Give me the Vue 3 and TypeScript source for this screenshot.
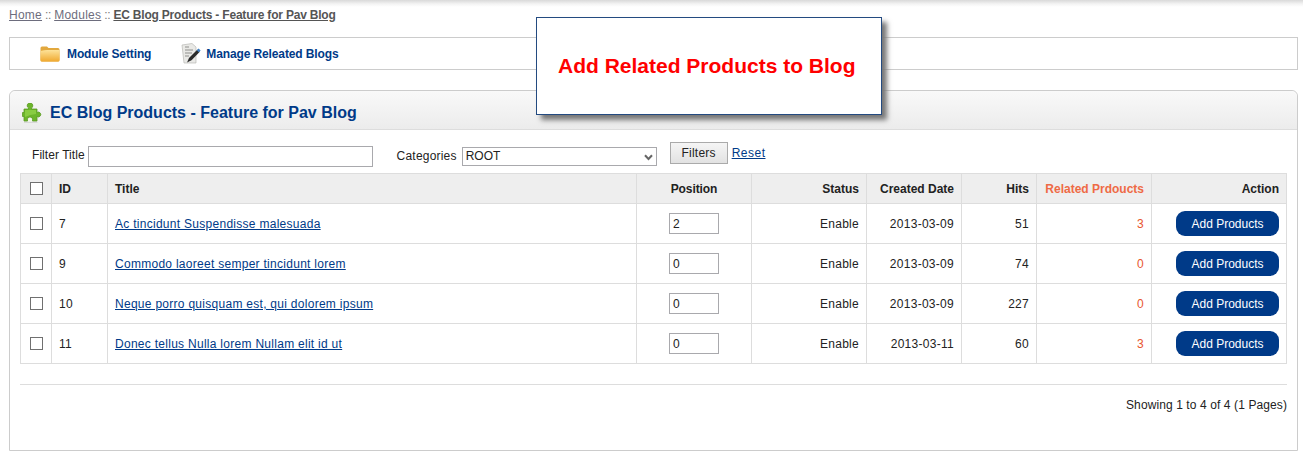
<script setup lang="ts">
interface Row { id: number; title: string; position: number; date: string; hits: number; related: number }
const rows: Row[] = [
  { id: 7, title: 'Ac tincidunt Suspendisse malesuada', position: 2, date: '2013-03-09', hits: 51, related: 3 },
  { id: 9, title: 'Commodo laoreet semper tincidunt lorem', position: 0, date: '2013-03-09', hits: 74, related: 0 },
  { id: 10, title: 'Neque porro quisquam est, qui dolorem ipsum', position: 0, date: '2013-03-09', hits: 227, related: 0 },
  { id: 11, title: 'Donec tellus Nulla lorem Nullam elit id ut', position: 0, date: '2013-03-11', hits: 60, related: 3 },
]
</script>

<template>
  <div class="page">
    <div class="breadcrumb">
      <a href="#">Home</a><span class="sep"> :: </span><a href="#">Modules</a><span class="sep"> :: </span><a href="#" class="current">EC Blog Products - Feature for Pav Blog</a>
    </div>

    <div class="toolbar">
      <a href="#" class="tool tool-first">
        <svg class="tool-icon" width="20" height="16" viewBox="0 0 20 16">
          <defs>
            <linearGradient id="folderG" x1="0" y1="0" x2="0" y2="1">
              <stop offset="0" stop-color="#fde39a" />
              <stop offset="1" stop-color="#f0a92f" />
            </linearGradient>
          </defs>
          <path d="M0.5 2 Q0.5 0.5 2 0.5 H7 L8.5 2 H18 Q19.5 2 19.5 3.5 V14 Q19.5 15.5 18 15.5 H2 Q0.5 15.5 0.5 14 Z" fill="#e2a83e" />
          <path d="M0.5 5 Q6 3.5 8.5 4 H19.5 V14 Q19.5 15.5 18 15.5 H2 Q0.5 15.5 0.5 14 Z" fill="url(#folderG)" />
        </svg>
        <span>Module Setting</span>
      </a>
      <a href="#" class="tool">
        <svg class="tool-icon" width="20" height="21" viewBox="0 0 20 21">
          <path d="M1 2 L11 0.5 L15 4 V20 H3 Z" fill="#e9e9e6" stroke="#b9b9b5" stroke-width="0.7" />
          <path d="M4 7 H12 M4 10 H11 M4 13 H8 M4 4 H8" stroke="#8f8f8c" stroke-width="1" fill="none" />
          <path d="M6 19.5 L8 15 L16.5 6.5 L18.8 8.8 L10.5 17.3 Z" fill="#2b2b2b" />
          <path d="M15.8 7.2 L17.6 5.4 L19.6 7.4 L17.8 9.2 Z" fill="#3d7fc4" />
        </svg>
        <span>Manage Releated Blogs</span>
      </a>
    </div>

    <div class="panel">
      <div class="panel-head">
        <svg class="puzzle" width="21" height="20" viewBox="0 0 21 20">
          <path d="M3 18.8 H16.5 V19.6 H3 Z" fill="#9a9a9a" opacity="0.45" />
          <path d="M3 6 H7.5 V5 A2.8 2.8 0 1 1 10.5 5 V6 H16 V9.5 A2.4 2.4 0 1 1 16 13.5 V18 H11.5 V16.5 A2.5 2.5 0 0 0 6.5 16.5 V18 H3 V13.5 H1.5 V9.5 H3 Z" fill="#6cb52b" stroke="#5a9a22" stroke-width="0.8" />
          <path d="M4 7 H15 V11 Q9 11.5 4 14 Z" fill="#93d44b" opacity="0.75" />
          <path d="M7 18.5 V16.8 A2 2 0 0 1 11 16.8 V18.5 Z" fill="#f2f7e8" />
        </svg>
        <h1>EC Blog Products - Feature for Pav Blog</h1>
      </div>

      <div class="panel-body">
        <div class="filters">
          <label class="filter-title">Filter Title</label>
          <input class="title-input" type="text" />
          <label class="filter-cat">Categories</label>
          <div class="select-wrap">
            <select class="cat-select">
              <option>ROOT</option>
            </select>
            <svg class="chevron" width="9" height="7" viewBox="0 0 9 7">
              <path d="M1 1.2 L4.5 5 L8 1.2" fill="none" stroke="#666" stroke-width="2" />
            </svg>
          </div>
          <button class="filter-btn" type="button">Filters</button>
          <a href="#" class="reset">Reset</a>
        </div>

        <table class="grid">
          <colgroup>
            <col class="c-check" /><col class="c-id" /><col class="c-title" /><col class="c-pos" /><col class="c-status" /><col class="c-date" /><col class="c-hits" /><col class="c-rel" /><col class="c-action" />
          </colgroup>
          <thead>
            <tr>
              <th class="center"><input class="check" type="checkbox" /></th>
              <th class="left">ID</th>
              <th class="left">Title</th>
              <th class="center pos-head">Position</th>
              <th>Status</th>
              <th>Created Date</th>
              <th>Hits</th>
              <th class="related">Related Prdoucts</th>
              <th>Action</th>
            </tr>
          </thead>
          <tbody>
            <tr v-for="row in rows" :key="row.id">
              <td class="center"><input class="check" type="checkbox" /></td>
              <td class="left">{{ row.id }}</td>
              <td class="left"><a href="#" class="title-link">{{ row.title }}</a></td>
              <td class="center"><input class="pos-input" type="text" :value="row.position" /></td>
              <td>Enable</td>
              <td>{{ row.date }}</td>
              <td>{{ row.hits }}</td>
              <td class="related">{{ row.related }}</td>
              <td><a href="#" class="add-btn">Add Products</a></td>
            </tr>
          </tbody>
        </table>

        <div class="pagination">Showing 1 to 4 of 4 (1 Pages)</div>
      </div>
    </div>

    <div class="callout">Add Related Products to Blog</div>
  </div>
</template>

<style>
html, body { margin: 0; background: #fff; }
</style>

<style scoped>
.page {
  position: relative;
  box-sizing: border-box;
  width: 1303px;
  height: 462px;
  padding: 8px 5px 0 9px;
  overflow: hidden;
  font-family: "Liberation Sans", Arial, sans-serif;
  font-size: 12px;
  color: #222;
  background: linear-gradient(to bottom, #d9d9d9 0, #f4f4f4 4px, #fff 7px);
}
.breadcrumb {
  height: 15px;
  line-height: 15px;
  color: #7a7a7a;
}
.breadcrumb a { color: #6d6d7d; letter-spacing: 0.25px; }
.breadcrumb .sep { letter-spacing: -0.3px; }
.breadcrumb a.current { color: #555; font-weight: bold; letter-spacing: -0.2px; }
.toolbar {
  box-sizing: border-box;
  display: flex;
  align-items: center;
  height: 33px;
  margin-top: 14px;
  padding-left: 30px;
  border: 1px solid #ccc;
  background: #fff;
}
.tool {
  display: flex;
  align-items: center;
  gap: 5px;
  color: #003a88;
  font-weight: bold;
  letter-spacing: -0.12px;
  text-decoration: none;
}
.tool-first { gap: 7px; margin-right: 30px; }
.panel {
  box-sizing: border-box;
  height: 361px;
  margin-top: 20px;
  border: 1px solid #ccc;
  border-radius: 6px 6px 0 0;
  background: #fff;
}
.panel-head {
  box-sizing: border-box;
  display: flex;
  align-items: center;
  gap: 9px;
  height: 39px;
  padding: 6px 0 0 11px;
  border-bottom: 1px solid #ddd;
  border-radius: 6px 6px 0 0;
  background: linear-gradient(to bottom, #f9f9f9, #ececec);
}
.panel-head h1 {
  margin: 0 0 0 -1px;
  font-size: 16px;
  font-weight: bold;
  color: #003a88;
}
.panel-body { padding: 14px 10px 0; }
.filters {
  display: flex;
  align-items: center;
  height: 22px;
}
.filter-title { margin-left: 12px; letter-spacing: 0.05px; }
.title-input {
  box-sizing: border-box;
  width: 285px;
  height: 21px;
  margin: 2px 0 0 3px;
  border: 1px solid #a9a9ad;
  background: #fff;
}
.filter-cat { margin-left: 24px; margin-top: 2px; letter-spacing: 0.2px; }
.select-wrap {
  position: relative;
  width: 195px;
  height: 19px;
  margin: 2px 0 0 5px;
}
.cat-select {
  box-sizing: border-box;
  display: block;
  width: 100%;
  height: 100%;
  padding: 0 0 0 3px;
  appearance: none;
  border: 1px solid #a9a9ad;
  border-radius: 0;
  background: #fff;
  font-family: inherit;
  font-size: 12px;
  color: #222;
}
.chevron {
  position: absolute;
  right: 4px;
  top: 7px;
  pointer-events: none;
}
.filter-btn {
  box-sizing: border-box;
  width: 58px;
  height: 22px;
  margin: -4px 0 0 13px;
  padding: 0;
  border: 1px solid #aaa;
  background: linear-gradient(to bottom, #f5f5f5, #e2e2e2);
  font-family: inherit;
  font-size: 12px;
  letter-spacing: 0.2px;
  color: #222;
}
.reset {
  margin: -5px 0 0 4px;
  color: #003a88;
  letter-spacing: 0.5px;
}
.grid {
  width: 1266px;
  margin-top: 7px;
  border-collapse: collapse;
  table-layout: fixed;
  color: #222;
}
.c-check { width: 31px; }
.c-id { width: 56px; }
.c-title { width: 529px; }
.c-pos { width: 115px; }
.c-status { width: 115px; }
.c-date { width: 95px; }
.c-hits { width: 75px; }
.c-rel { width: 115px; }
.c-action { width: 135px; }
.grid th, .grid td {
  box-sizing: border-box;
  padding: 0 7px;
  border: 1px solid #ddd;
  text-align: right;
  white-space: nowrap;
}
.grid th {
  height: 30px;
  background: #eee;
  font-weight: bold;
}
.grid td {
  height: 40px;
  letter-spacing: 0.28px;
}
.grid .left { text-align: left; }
.grid .center { text-align: center; padding: 0; }
.grid .left { padding-left: 7px; }
.grid .pos-head { letter-spacing: -0.1px; }
.grid th.related { color: #ee6a45; }
.grid td.related { color: #e8562e; }
.check {
  box-sizing: border-box;
  display: block;
  width: 13px;
  height: 13px;
  margin: 0 auto;
  appearance: none;
  border: 1px solid #707070;
  background: #fff;
}
.title-link { color: #003a88; }
.pos-input {
  box-sizing: border-box;
  display: inline-block;
  width: 50px;
  height: 21px;
  padding: 0 3px;
  vertical-align: middle;
  border: 1px solid #a9a9ad;
  font-family: inherit;
  font-size: 12px;
  color: #222;
}
.add-btn {
  box-sizing: border-box;
  display: inline-block;
  width: 103px;
  height: 25px;
  padding-top: 1px;
  line-height: 25px;
  border-radius: 9px;
  background: #003a88;
  color: #fff;
  letter-spacing: 0;
  text-align: center;
  text-decoration: none;
  vertical-align: middle;
}
.pagination {
  margin-top: 20px;
  padding-top: 13px;
  border-top: 1px solid #ddd;
  text-align: right;
  letter-spacing: 0.1px;
  color: #222;
}
.callout {
  position: absolute;
  left: 536px;
  top: 17px;
  box-sizing: border-box;
  width: 346px;
  height: 98px;
  padding-left: 21px;
  border: 1px solid #234a80;
  background: #fff;
  box-shadow: 5px 5px 5px #777;
  display: flex;
  align-items: center;
  color: #f00;
  font-size: 21px;
  font-weight: bold;
  white-space: nowrap;
}
</style>
